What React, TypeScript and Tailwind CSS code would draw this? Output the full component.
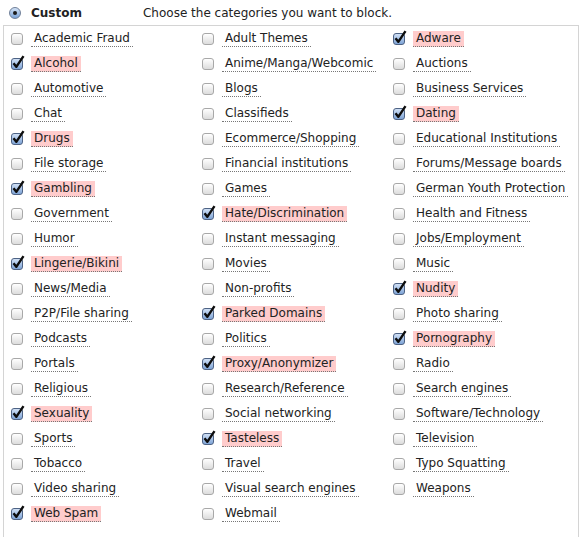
import React from "react";

const columns: [string, boolean][][] = [
  [
    ["Academic Fraud", false],
    ["Alcohol", true],
    ["Automotive", false],
    ["Chat", false],
    ["Drugs", true],
    ["File storage", false],
    ["Gambling", true],
    ["Government", false],
    ["Humor", false],
    ["Lingerie/Bikini", true],
    ["News/Media", false],
    ["P2P/File sharing", false],
    ["Podcasts", false],
    ["Portals", false],
    ["Religious", false],
    ["Sexuality", true],
    ["Sports", false],
    ["Tobacco", false],
    ["Video sharing", false],
    ["Web Spam", true],
  ],
  [
    ["Adult Themes", false],
    ["Anime/Manga/Webcomic", false],
    ["Blogs", false],
    ["Classifieds", false],
    ["Ecommerce/Shopping", false],
    ["Financial institutions", false],
    ["Games", false],
    ["Hate/Discrimination", true],
    ["Instant messaging", false],
    ["Movies", false],
    ["Non-profits", false],
    ["Parked Domains", true],
    ["Politics", false],
    ["Proxy/Anonymizer", true],
    ["Research/Reference", false],
    ["Social networking", false],
    ["Tasteless", true],
    ["Travel", false],
    ["Visual search engines", false],
    ["Webmail", false],
  ],
  [
    ["Adware", true],
    ["Auctions", false],
    ["Business Services", false],
    ["Dating", true],
    ["Educational Institutions", false],
    ["Forums/Message boards", false],
    ["German Youth Protection", false],
    ["Health and Fitness", false],
    ["Jobs/Employment", false],
    ["Music", false],
    ["Nudity", true],
    ["Photo sharing", false],
    ["Pornography", true],
    ["Radio", false],
    ["Search engines", false],
    ["Software/Technology", false],
    ["Television", false],
    ["Typo Squatting", false],
    ["Weapons", false],
  ],
];

function Checkbox({ checked }: { checked: boolean }) {
  return (
    <span className="relative inline-block h-3 w-3 shrink-0">
      <span
        className={
          checked
            ? "absolute inset-0 rounded-[3px] border border-[#4d6284] bg-gradient-to-b from-[#d0e0f5] to-[#7fa4d6]"
            : "absolute inset-0 rounded-[3px] border border-[#a8a8a8] bg-gradient-to-b from-[#ffffff] to-[#dcdcdc]"
        }
      />
      {checked ? (
        <svg className="absolute -top-[3px] left-[1px]" width="13" height="14" viewBox="0 0 13 14">
          <path d="M1.5 8.2 L4.3 11.8 L11.5 1.2" fill="none" stroke="#0d0d0d" strokeWidth="2.4" strokeLinejoin="round" />
        </svg>
      ) : null}
    </span>
  );
}

function Radio() {
  return (
    <span className="relative flex h-3 w-3 items-center justify-center rounded-full border border-[#6f7f99] bg-gradient-to-b from-[#d2e2f6] to-[#7aa3d8]">
      <span className="h-[4px] w-[4px] rounded-full bg-[#1a1a1a]" />
    </span>
  );
}

export default function App() {
  return (
    <div className="h-[537px] w-[587px] overflow-hidden bg-white text-[12px] text-[#222] [font-family:'DejaVu_Sans',Verdana,sans-serif]">
      <div className="flex h-[25px] items-center">
        <div className="ml-[9px]"><Radio /></div>
        <span className="ml-[10px] font-bold">Custom</span>
        <span className="ml-[61px]">Choose the categories you want to block.</span>
      </div>
      <div className="ml-[3px] w-[576px] border border-b-0 border-[#d4d4d4] pb-8">
        <div className="grid grid-cols-[191px_191px_191px]">
          {columns.map((col, i) => (
            <div key={i} className="flex flex-col">
              {col.map(([name, checked]) => (
                <div key={name} className="flex h-[25px] items-center pl-[7px]">
                  <Checkbox checked={checked} />
                  <span
                    className={
                      "ml-[8px] border-b border-dotted border-[#777] px-[3px] leading-[15px] " +
                      (checked ? "bg-[#ffcccc]" : "")
                    }
                  >
                    {name}
                  </span>
                </div>
              ))}
            </div>
          ))}
        </div>
      </div>
    </div>
  );
}
